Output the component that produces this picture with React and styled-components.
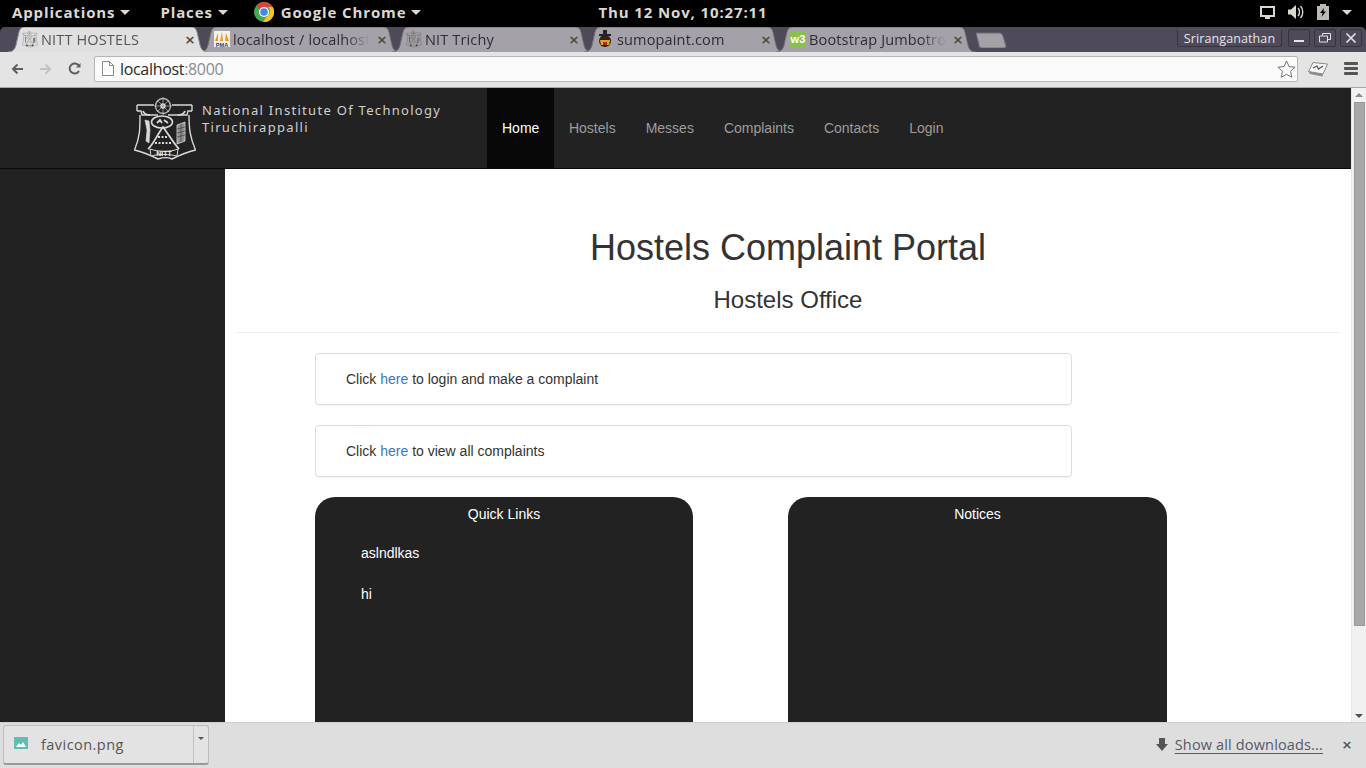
import styled, { createGlobalStyle } from 'styled-components';

const GlobalStyle = createGlobalStyle`
  html, body {
    margin: 0;
    height: 100%;
    overflow: hidden;
    background: #000;
  }
  * {
    box-sizing: border-box;
  }
`;

const Screen = styled.div`
  width: 1366px;
  height: 768px;
  display: flex;
  flex-direction: column;
  overflow: hidden;
`;

/* desktop panel */
const Panel = styled.div`
  height: 27px;
  flex: none;
  background: #000;
  display: grid;
  grid-template-columns: 1fr auto 1fr;
  align-items: center;
  padding-bottom: 3px;
  color: #dcd8d0;
  font: 700 15px "Open Sans", sans-serif;
  letter-spacing: 0.87px;
`;

const PanelLeft = styled.div`
  display: flex;
  align-items: center;
  padding-left: 12px;
`;

const PanelMenu = styled.span`
  display: flex;
  align-items: center;
  gap: 5px;
  margin-right: ${(p) => p.$gap}px;
`;

const PanelCaret = styled.i`
  width: 0;
  height: 0;
  border-left: 5px solid transparent;
  border-right: 5px solid transparent;
  border-top: 5px solid #dcd8d0;
`;

const PanelRight = styled.div`
  display: flex;
  justify-content: flex-end;
  align-items: center;
  gap: 13px;
  padding-right: 14px;
`;

/* tab strip */
const TabStrip = styled.div`
  height: 25px;
  flex: none;
  background: #4f4a5a;
  border-radius: 5px 5px 0 0;
  display: flex;
  align-items: flex-end;
  padding-left: 8px;
`;

const Tab = styled.div`
  position: relative;
  width: 200px;
  height: 25px;
  margin-right: -8px;
  flex: none;
  display: flex;
  align-items: center;
  padding: 0 12px 1px 14px;
  font: 14.5px "Open Sans", sans-serif;
  letter-spacing: 0.15px;
  color: ${(p) => (p.$active ? '#555' : '#2f2b3a')};
  z-index: ${(p) => (p.$active ? 2 : 1)};
`;

const TabShape = styled.svg`
  position: absolute;
  left: 0;
  top: 0;
  z-index: -1;
`;

const TabTitle = styled.span`
  flex: 1;
  margin-left: 3px;
  white-space: nowrap;
  overflow: hidden;
  mask-image: linear-gradient(to right, #000 82%, transparent 100%);
`;

const TabClose = styled.span`
  flex: none;
  width: 12px;
  margin-left: 6px;
  text-align: center;
  font: 700 13px "DejaVu Sans", sans-serif;
  color: #4a4a4a;
`;

const NewTab = styled.svg`
  flex: none;
  margin-left: 7px;
  margin-bottom: 4px;
`;

const WindowControls = styled.div`
  margin-left: auto;
  align-self: flex-start;
  display: flex;
  padding: 2px 4px 0 0;
  gap: 4px;
`;

const UserButton = styled.div`
  width: 105px;
  height: 18px;
  margin-right: 2px;
  border: 1px solid #383442;
  border-top-color: #5c5768;
  border-radius: 0 0 3px 3px;
  color: #e6e4ea;
  font: 12.5px/18px "Open Sans", sans-serif;
  letter-spacing: 0.1px;
  text-align: center;
`;

const WindowButton = styled.div`
  width: 22px;
  height: 18px;
  border: 1px solid #38343f;
  border-radius: 2px;
  display: flex;
  align-items: center;
  justify-content: center;
`;

/* browser toolbar */
const Toolbar = styled.div`
  height: 36px;
  flex: none;
  background: #e4e4e4;
  border-bottom: 1px solid #a8a8a8;
  display: flex;
  align-items: center;
  padding: 0 8px 2px 0;
`;

const NavIcon = styled.span`
  width: 29px;
  display: flex;
  justify-content: center;
  flex: none;
  margin-left: ${(p) => p.$left || 0}px;
`;

const Omnibox = styled.div`
  width: 1205px;
  height: 26px;
  margin-left: 5px;
  background: #fbfbfb;
  border: 1px solid #b5b5b5;
  border-radius: 2px;
  display: flex;
  align-items: center;
  padding: 0 1px 0 7px;
  font: 16px "Open Sans", sans-serif;
  letter-spacing: -0.32px;
  color: #2b2b2b;
`;

const UrlText = styled.span`
  margin-left: 6px;
  flex: 1;
`;

const UrlPort = styled.span`
  color: #8c8c8c;
`;

const ToolbarIcons = styled.div`
  display: flex;
  align-items: center;
  gap: 15px;
  margin-left: 10px;
`;

/* page viewport */
const Viewport = styled.div`
  flex: 1;
  min-height: 0;
  display: flex;
  overflow: hidden;
`;

const Page = styled.div`
  flex: 1;
  min-width: 0;
  display: flex;
  flex-direction: column;
  background: #fff;
  font: 14px/20px "Liberation Sans", Arial, sans-serif;
  color: #333;
`;

const Navbar = styled.nav`
  height: 81px;
  flex: none;
  background: #222;
  border-bottom: 1px solid #080808;
  display: flex;
  padding-left: 134px;
`;

const Brand = styled.div`
  width: 353px;
  display: flex;
  align-items: flex-start;
  padding-top: 8px;
`;

const BrandText = styled.div`
  margin: 6px 0 0 6px;
  color: #d0d0d0;
  font: 13px/17px "Noto Sans", sans-serif;
  letter-spacing: 1.3px;
  white-space: nowrap;
`;

const NavLink = styled.a`
  padding: 0 15px;
  display: flex;
  align-items: center;
  margin-right: ${(p) => (p.$active ? '-0.4px' : '0')};
  color: ${(p) => (p.$active ? '#fff' : '#9d9d9d')};
  background: ${(p) => (p.$active ? '#080808' : 'transparent')};
`;

const Body = styled.div`
  flex: 1;
  min-height: 0;
  display: flex;
  overflow: hidden;
`;

const Sidebar = styled.aside`
  width: 225px;
  flex: none;
  background: #222;
`;

const Content = styled.main`
  flex: 1;
  min-width: 0;
  padding: 0 11px;
`;

const Title = styled.h1`
  margin: 57px 0 0;
  font: 500 36px/44px "Liberation Sans", Arial, sans-serif;
  text-align: center;
`;

const Subtitle = styled.h3`
  margin: 17px 0 0;
  font: 500 24px/26px "Liberation Sans", Arial, sans-serif;
  text-align: center;
`;

const Rule = styled.hr`
  margin: 19px 0 20px;
  border: 0;
  border-top: 1px solid #eee;
`;

const Well = styled.div`
  width: 757px;
  height: 52px;
  margin: 0 0 20px 79px;
  padding: 15px 30px;
  border: 1px solid #ddd;
  border-radius: 4px;
  box-shadow: 0 1px 1px rgba(0, 0, 0, 0.05);
`;

const Link = styled.a`
  color: #337ab7;
`;

const Panels = styled.div`
  display: flex;
  gap: 95px;
  margin-left: 79px;
`;

const InfoPanel = styled.section`
  width: ${(p) => p.$width}px;
  height: 400px;
  flex: none;
  padding-top: 7px;
  background: #222;
  border-radius: 20px;
  color: #fff;
`;

const PanelTitle = styled.div`
  text-align: center;
`;

const PanelList = styled.ul`
  list-style: none;
  margin: 19px 0 0;
  padding: 0 0 0 46px;
`;

const PanelItem = styled.li`
  margin-bottom: 21px;
`;

const Scrollbar = styled.div`
  width: 15px;
  flex: none;
  background: #f1f1f1;
  border-left: 1px solid #e6e6e6;
  display: flex;
  flex-direction: column;
  align-items: center;
  padding: 5px 0 4px;
`;

const ScrollThumb = styled.div`
  width: 11px;
  height: 524px;
  margin: 5px 0 auto;
  background: #a8a8a8;
  border: 1px solid #999;
`;

const ScrollArrow = styled.i`
  width: 0;
  height: 0;
  border-left: 4px solid transparent;
  border-right: 4px solid transparent;
  ${(p) => (p.$up ? 'border-bottom: 4px solid #8c8c8c;' : 'border-top: 4px solid #505050;')}
`;

/* downloads bar */
const DownloadBar = styled.div`
  height: 46px;
  flex: none;
  background: #dedede;
  border-top: 1px solid #cfcfcf;
  display: flex;
  align-items: center;
  padding: 0 13px 2px 3px;
  font: 14.5px "Open Sans", sans-serif;
  color: #555;
`;

const DownloadItem = styled.div`
  width: 206px;
  height: 40px;
  display: flex;
  align-items: center;
  background: #e3e3e3;
  border: 1px solid #bcbcbc;
  border-bottom: 2px solid #9a9a9a;
  border-radius: 3px;
`;

const FileName = styled.span`
  flex: 1;
  padding-left: 13px;
  letter-spacing: 0.45px;
`;

const FileIcon = styled.svg`
  margin: -3px 0 0 10px;
  flex: none;
`;

const ItemMenu = styled.div`
  width: 15px;
  height: 100%;
  border-left: 1px solid #c2c2c2;
  display: flex;
  justify-content: center;
  padding-top: 11px;
`;

const ItemCaret = styled.i`
  width: 0;
  height: 0;
  border-left: 3px solid transparent;
  border-right: 3px solid transparent;
  border-top: 3px solid #555;
`;

const ShowAll = styled.a`
  margin-left: 7px;
  color: #54596a;
  letter-spacing: 0.15px;
  text-decoration: underline;
  text-underline-offset: 3px;
`;

const BarRight = styled.div`
  margin-left: auto;
  display: flex;
  align-items: center;
`;

const BarClose = styled.span`
  margin-left: 18px;
  width: 12px;
  text-align: center;
  font: 700 13px "DejaVu Sans", sans-serif;
  color: #555;
`;

function Crest({ size = 62, color = '#d8d8d8' }) {
  return (
    <svg width={size} height={size + 2} viewBox="0 0 62 64" fill="none" stroke={color} strokeWidth="1.4">
      <circle cx="29" cy="10" r="7.500" opacity="0.8" />
      <circle cx="29" cy="10" r="2" />
      <path d="M29 1v18M20 10h18M23 4l12 12M35 4 23 16" strokeWidth="0.8" opacity="0.7" />
      <path d="M3 9h17M38 9h20M3 9v6M58 9v6M3 15h4l1 4h16M58 15h-4l-1 4H34" />
      <path d="M6 19c0 14 0 22-5.500 35C9 56 18 60 24 63c6-2 10-2 14 0 6-3 15-7 23.500-9C56 41 55 33 55 19" />
      <path d="M9 15c1 3 4 4 7 4M51 15c-1 3-4 4-7 4" strokeWidth="1.800" />
      <ellipse cx="28" cy="26" rx="10.500" ry="6" strokeWidth="1.600" />
      <path d="M23 27l3-3 2 3M30 24l4 3" strokeWidth="1.800" />
      <path d="M11 24l4 1 1 9-1 13-3-2 1-11z" fill={color} strokeWidth="0.6" />
      <path d="M14 53c5-4 9-14 15-22 6 8 11 17 16 22" strokeWidth="1.800" />
      <path d="M24 41l10 0M21 47h16" strokeWidth="2" strokeDasharray="2 1.500" />
      <path d="M43 29l8-3v19l-8 3z" fill="#8f8f8f" strokeWidth="0.8" />
      <path d="M43 33l8-2M43 37l8-2M43 41l8-2M47 28v18" stroke="#333" strokeWidth="0.6" />
      <path d="M16 53c8 3 21 3 28 0l-1 7c-8-2-19-2-26 0z" fill="#222" strokeWidth="1" />
      <text x="30" y="59.500" fill="#f0f0f0" stroke="none" fontFamily="Liberation Sans" fontWeight="700" fontSize="7" textAnchor="middle">NITT</text>
    </svg>
  );
}

function PmaIcon() {
  return (
    <svg width="16" height="16" viewBox="0 0 16 16">
      <rect width="16" height="16" fill="#f4f1ea" />
      <path d="M1 10 4 2v8zM6 10l2-9 1 9zM11 10l1-8 3 8z" fill="#f0971e" />
      <text x="8" y="15.500" fontSize="5.500" fontWeight="700" fontFamily="Liberation Sans" fill="#2b3a73" textAnchor="middle">PMA</text>
    </svg>
  );
}

function SumoIcon() {
  return (
    <svg width="16" height="18" viewBox="0 0 16 18">
      <rect x="5" y="0" width="4" height="5" fill="#222" />
      <rect x="1" y="4" width="12" height="2" fill="#222" />
      <circle cx="7" cy="11" r="6" fill="#2a2522" />
      <path d="M2 10h10l-1 5H3z" fill="#e2a12a" />
      <rect x="5" y="12" width="4" height="3" fill="#b22a1c" />
    </svg>
  );
}

function W3Icon() {
  return (
    <svg width="16" height="16" viewBox="0 0 16 16">
      <rect width="16" height="16" fill="#8ac249" />
      <text x="8" y="12" fontSize="11" fontWeight="700" fontFamily="Liberation Sans" fill="#fff" textAnchor="middle">w3</text>
    </svg>
  );
}

function ChromeIcon() {
  return (
    <svg width="20" height="20" viewBox="0 0 20 20" style={{ marginRight: 7 }}>
      <circle cx="10" cy="10" r="10" fill="#4aa657" />
      <path d="M10 0a10 10 0 0 1 8.700 5H10a5 5 0 0 0-4.500 2.800L2.300 3.500A10 10 0 0 1 10 0z" fill="#db4437" />
      <path d="M18.700 5A10 10 0 0 1 9 20l4.600-6.800A5 5 0 0 0 14 5z" fill="#f5c518" />
      <circle cx="10" cy="10" r="5" fill="#fff" />
      <circle cx="10" cy="10" r="3.800" fill="#4a86e8" />
    </svg>
  );
}

const tabOutline = 'M0 25C5 25 7 22 8 18L11 5C12 1 14 0 18 0H182C186 0 188 1 189 5L192 18C193 22 195 25 200 25';

const tabs = [
  { title: 'NITT HOSTELS', icon: <Crest size={16} color="#777" />, active: true },
  { title: 'localhost / localhost', icon: <PmaIcon /> },
  { title: 'NIT Trichy', icon: <Crest size={16} color="#5a5a5a" /> },
  { title: 'sumopaint.com', icon: <SumoIcon /> },
  { title: 'Bootstrap Jumbotron', icon: <W3Icon /> },
];

const navItems = ['Home', 'Hostels', 'Messes', 'Complaints', 'Contacts', 'Login'];

export default function App() {
  return (
    <Screen>
      <GlobalStyle />
      <Panel>
        <PanelLeft>
          <PanelMenu $gap={30}>Applications <PanelCaret /></PanelMenu>
          <PanelMenu $gap={26}>Places <PanelCaret /></PanelMenu>
          <ChromeIcon />
          <PanelMenu $gap={0}>Google Chrome <PanelCaret /></PanelMenu>
        </PanelLeft>
        <span>Thu 12 Nov, 10:27:11</span>
        <PanelRight>
          <svg width="15" height="14" viewBox="0 0 15 14" fill="none" stroke="#dcd8d0" strokeWidth="2">
            <path d="M1 2h13v9H1zM5 13h5" />
          </svg>
          <svg width="16" height="14" viewBox="0 0 16 14" fill="#dcd8d0">
            <path d="M0 4.500h3L8 0v14L3 9.500H0z" />
            <path d="M10 3c2 2 2 6 0 8M12.500 1c3 3 3 9 0 12" fill="none" stroke="#dcd8d0" strokeWidth="1.400" />
          </svg>
          <svg width="12" height="16" viewBox="0 0 12 16">
            <path d="M3 0h6v2h3v14H0V2h3z" fill="#bdbab3" />
            <path d="M7 4 3 9h2.500L4.500 13 9 7.500H6.500z" fill="#000" />
          </svg>
          <PanelCaret />
        </PanelRight>
      </Panel>

      <TabStrip>
        {tabs.map((tab) => (
          <Tab key={tab.title} $active={tab.active}>
            <TabShape width="200" height="25" viewBox="0 0 200 25">
              <path
                d={tabOutline}
                fill={tab.active ? '#e0e0e0' : '#a5a1a8'}
                stroke={tab.active ? '#8d8a92' : '#6e6a76'}
              />
            </TabShape>
            {tab.icon}
            <TabTitle>{tab.title}</TabTitle>
            <TabClose>×</TabClose>
          </Tab>
        ))}
        <NewTab width="32" height="16" viewBox="0 0 32 16">
          <path d="M1 1h23c2 0 3 1 4 3l3 10c0 1-1 2-2 2H7c-2 0-3-1-3-3z" fill="#a5a1a8" stroke="#6e6a76" />
        </NewTab>
        <WindowControls>
          <UserButton>Sriranganathan</UserButton>
          <WindowButton>
            <svg width="12" height="10" viewBox="0 0 12 10"><path d="M1 8h10" stroke="#e6e4ea" strokeWidth="2" /></svg>
          </WindowButton>
          <WindowButton>
            <svg width="12" height="10" viewBox="0 0 12 10" fill="none" stroke="#e6e4ea"><path d="M3.500 2.500V.500h8v6h-3M.500 3h8v6h-8z" /></svg>
          </WindowButton>
          <WindowButton>
            <svg width="12" height="12" viewBox="0 0 12 12"><path d="M1.500 1.500l9 9M10.500 1.500l-9 9" stroke="#e6e4ea" strokeWidth="1.600" /></svg>
          </WindowButton>
        </WindowControls>
      </TabStrip>

      <Toolbar>
        <NavIcon $left={2}>
          <svg width="12" height="12" viewBox="0 0 12 12" fill="none" stroke="#5f5f5f" strokeWidth="2"><path d="M12 6H2M6.500 1.500 2 6l4.500 4.500" /></svg>
        </NavIcon>
        <NavIcon>
          <svg width="12" height="12" viewBox="0 0 12 12" fill="none" stroke="#c2c2c2" strokeWidth="2"><path d="M0 6h10M5.500 1.500 10 6l-4.500 4.500" /></svg>
        </NavIcon>
        <NavIcon>
          <svg width="13" height="13" viewBox="0 0 13 13" fill="none" stroke="#5f5f5f" strokeWidth="2"><path d="M11 9a5 5 0 1 1 0-5" /><path d="M12.500 1v4.500H8z" fill="#5f5f5f" stroke="none" /></svg>
        </NavIcon>
        <Omnibox>
          <svg width="12" height="15" viewBox="0 0 12 15" fill="#fff" stroke="#8a8a8a"><path d="M.500.500h7l4 4v10H.500zM7.500.500v4h4" /></svg>
          <UrlText>localhost<UrlPort>:8000</UrlPort></UrlText>
          <svg width="19" height="18" viewBox="0 0 20 19" fill="#fbfbfb" stroke="#6a6a6a"><path d="M10 1l2.700 5.900 6.300.7-4.700 4.300 1.300 6.300L10 15.100l-5.600 3.100 1.300-6.300L1 7.600l6.300-.7z" /></svg>
        </Omnibox>
        <ToolbarIcons>
          <svg width="20" height="16" viewBox="0 0 20 16">
            <path d="M5 1.500 19.500 3 15 13 .5 10.500z" fill="#f6f6f6" stroke="#8a8a8a" />
            <path d="M.5 10.500 15 13l-.5 2.500L2 13z" fill="#8c8c8c" />
            <path d="M5 7l4-2 1.500 3 4.500-3" fill="none" stroke="#555" strokeWidth="1.200" />
          </svg>
          <svg width="14" height="13" viewBox="0 0 14 13" fill="#555" style={{ marginLeft: 1 }}>
            <rect width="14" height="3" rx="1" />
            <rect y="5" width="14" height="3" rx="1" />
            <rect y="10" width="14" height="3" rx="1" />
          </svg>
        </ToolbarIcons>
      </Toolbar>

      <Viewport>
        <Page>
          <Navbar>
            <Brand>
              <Crest />
              <BrandText>National Institute Of Technology<br />Tiruchirappalli</BrandText>
            </Brand>
            {navItems.map((item, i) => (
              <NavLink key={item} $active={i === 0}>{item}</NavLink>
            ))}
          </Navbar>
          <Body>
            <Sidebar />
            <Content>
              <Title>Hostels Complaint Portal</Title>
              <Subtitle>Hostels Office</Subtitle>
              <Rule />
              <Well>Click <Link>here</Link> to login and make a complaint</Well>
              <Well>Click <Link>here</Link> to view all complaints</Well>
              <Panels>
                <InfoPanel $width={378}>
                  <PanelTitle>Quick Links</PanelTitle>
                  <PanelList>
                    <PanelItem>aslndlkas</PanelItem>
                    <PanelItem>hi</PanelItem>
                  </PanelList>
                </InfoPanel>
                <InfoPanel $width={379}>
                  <PanelTitle>Notices</PanelTitle>
                </InfoPanel>
              </Panels>
            </Content>
          </Body>
        </Page>
        <Scrollbar>
          <ScrollArrow $up />
          <ScrollThumb />
          <ScrollArrow />
        </Scrollbar>
      </Viewport>

      <DownloadBar>
        <DownloadItem>
          <FileIcon width="14" height="12" viewBox="0 0 14 12">
            <rect width="14" height="12" fill="#5fbdb4" />
            <path d="M2 10l3-4 2 2 2-3 3 5z" fill="#fff" />
          </FileIcon>
          <FileName>favicon.png</FileName>
          <ItemMenu><ItemCaret /></ItemMenu>
        </DownloadItem>
        <BarRight>
          <svg width="12" height="13" viewBox="0 0 12 13" fill="#555"><path d="M3 0h6v6h3l-6 7-6-7h3z" /></svg>
          <ShowAll>Show all downloads...</ShowAll>
          <BarClose>×</BarClose>
        </BarRight>
      </DownloadBar>
    </Screen>
  );
}
